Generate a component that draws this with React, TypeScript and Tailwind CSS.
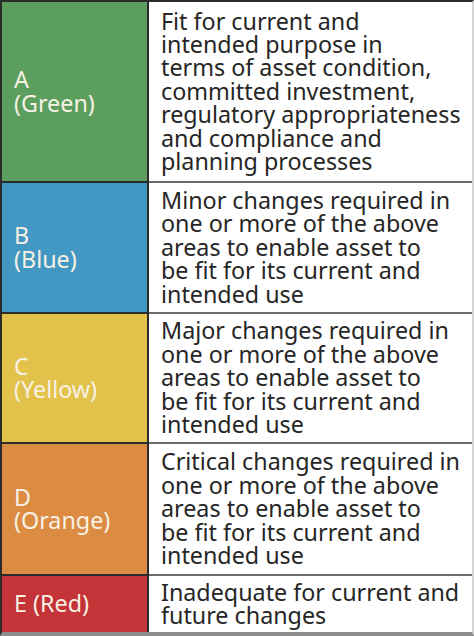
const rows = [
  {
    grade: ["A", "(Green)"],
    bg: "bg-[#5b9e5e]",
    h: "h-[181px]",
    text: [
      "Fit for current and",
      "intended purpose in",
      "terms of asset condition,",
      "committed investment,",
      "regulatory appropriateness",
      "and compliance and",
      "planning processes",
    ],
  },
  {
    grade: ["B", "(Blue)"],
    bg: "bg-[#4398c3]",
    h: "h-[131px]",
    text: [
      "Minor changes required in",
      "one or more of the above",
      "areas to enable asset to",
      "be fit for its current and",
      "intended use",
    ],
  },
  {
    grade: ["C", "(Yellow)"],
    bg: "bg-[#e3c24b]",
    h: "h-[130px]",
    text: [
      "Major changes required in",
      "one or more of the above",
      "areas to enable asset to",
      "be fit for its current and",
      "intended use",
    ],
  },
  {
    grade: ["D", "(Orange)"],
    bg: "bg-[#dc8b43]",
    h: "h-[132px]",
    text: [
      "Critical changes required in",
      "one or more of the above",
      "areas to enable asset to",
      "be fit for its current and",
      "intended use",
    ],
  },
  {
    grade: ["E (Red)"],
    bg: "bg-[#c33337]",
    h: "h-[56px]",
    text: ["Inadequate for current and", "future changes"],
  },
];

const App = () => {
  return (
    <div className="w-[474px] h-[636px] bg-white border-t-2 border-l-2 border-r-2 border-b-4 border-t-[#2b2b2b] border-l-[#2b2b2b] border-r-[#d6d6d6] border-b-[#8c8c8c] flex flex-col font-['Noto_Sans',sans-serif] text-[23.3px] leading-[23.4px]">
      {rows.map((row, i) => {
        const last = i === rows.length - 1;
        return (
          <div key={i} className={`flex ${row.h}`}>
            <div
              className={`w-[145px] shrink-0 flex flex-col justify-center pl-3 text-[#f7f1e4] ${row.bg} ${
                last ? "" : "border-b-2 border-[#2b2b2b]"
              }`}
            >
              {row.grade.map((g) => (
                <div key={g}>{g}</div>
              ))}
            </div>
            <div className="w-[2px] shrink-0 bg-[#2b2b2b]" />
            <div
              className={`flex-1 flex flex-col justify-center pl-3 text-[#262626] ${
                last ? "" : "border-b-2 border-[#6a6a6a]"
              }`}
            >
              {row.text.map((t) => (
                <div key={t} className="whitespace-nowrap">
                  {t}
                </div>
              ))}
            </div>
          </div>
        );
      })}
    </div>
  );
};

export default App;
